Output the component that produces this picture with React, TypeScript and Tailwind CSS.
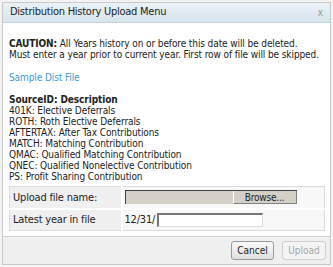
export default function App() {
  const sources = [
    '401K: Elective Deferrals',
    'ROTH: Roth Elective Deferrals',
    'AFTERTAX: After Tax Contributions',
    'MATCH: Matching Contribution',
    'QMAC: Qualified Matching Contribution',
    'QNEC: Qualified Nonelective Contribution',
    'PS: Profit Sharing Contribution',
  ];

  return (
    <div className="w-[333px] h-[267px] bg-[#f3f3f3] p-[2px] font-['DejaVu_Sans_Condensed','DejaVu_Sans',sans-serif] text-[#222]">
      <div className="h-[263px] flex flex-col bg-white border border-[#c9c9c9]">
        {/* Title bar */}
        <div className="h-[20px] flex items-center justify-between pl-[7px] pr-[7px] bg-gradient-to-b from-[#eaf2f6] to-[#d6e4ec] border-b border-[#c3d3dc]">
          <span className="text-[11px] tracking-[-0.25px] text-[#222]">Distribution History Upload Menu</span>
          <span className="text-[10px] text-[#999]">x</span>
        </div>

        {/* Body */}
        <div className="flex-1 pl-[6px] pr-[2px] pt-[15px] text-[10px] leading-[11px] tracking-[-0.1px]">
          <p className="whitespace-nowrap">
            <b>CAUTION:</b> All Years history on or before this date will be deleted.
            <br />
            Must enter a year prior to current year. First row of file will be skipped.
          </p>
          <a className="block mt-[12px] text-[#3d9ad6]">Sample Dist File</a>
          <div className="mt-[11px]">
            <div className="font-bold">SourceID: Description</div>
            {sources.map((s) => (
              <div key={s}>{s}</div>
            ))}
          </div>

          <table className="mt-[4px] w-[316px] border border-[#dcdcdc] border-collapse text-[11px] tracking-[-0.2px]">
            <tbody>
              <tr className="h-[22px]">
                <td className="w-[112px] bg-[#f0f0f0] pl-[3px] border-b-2 border-r-2 border-white">Upload file name:</td>
                <td className="bg-[#f8f8f8] pl-[2px] border-b-2 border-white">
                  <div className="flex w-[172px] h-[14px] bg-[#d4d0c8] border-t border-l border-[#404040]">
                    <div className="flex-1" />
                    <div className="w-[64px] h-[13px] flex items-center justify-center text-[10px] border-r border-b border-[#808080] border-l border-l-[#fff] bg-[#d4d0c8]">
                      Browse...
                    </div>
                  </div>
                </td>
              </tr>
              <tr className="h-[22px]">
                <td className="bg-[#f0f0f0] pl-[3px] border-r-2 border-white">Latest year in file</td>
                <td className="bg-[#f8f8f8] pl-[2px]">
                  <div className="flex items-center">
                    <span>12/31/</span>
                    <div className="ml-[2px] w-[106px] h-[14px] bg-white border-t-2 border-l-2 border-[#777] border-b border-r border-b-[#ddd] border-r-[#ddd]" />
                  </div>
                </td>
              </tr>
            </tbody>
          </table>
        </div>

        {/* Footer */}
        <div className="h-[28px] flex items-center justify-end gap-[8px] pr-[4px] bg-[#efefef] border-t border-[#d0d0d0] text-[10px]">
          <button className="w-[43px] h-[19px] rounded-[3px] border border-[#9a9a9a] bg-gradient-to-b from-[#fafafa] to-[#e0e0e0] text-[#222]">
            Cancel
          </button>
          <button className="w-[44px] h-[19px] rounded-[3px] border border-[#cfcfcf] bg-[#f4f4f4] text-[#a5a5a5]">
            Upload
          </button>
        </div>
      </div>
    </div>
  );
}
